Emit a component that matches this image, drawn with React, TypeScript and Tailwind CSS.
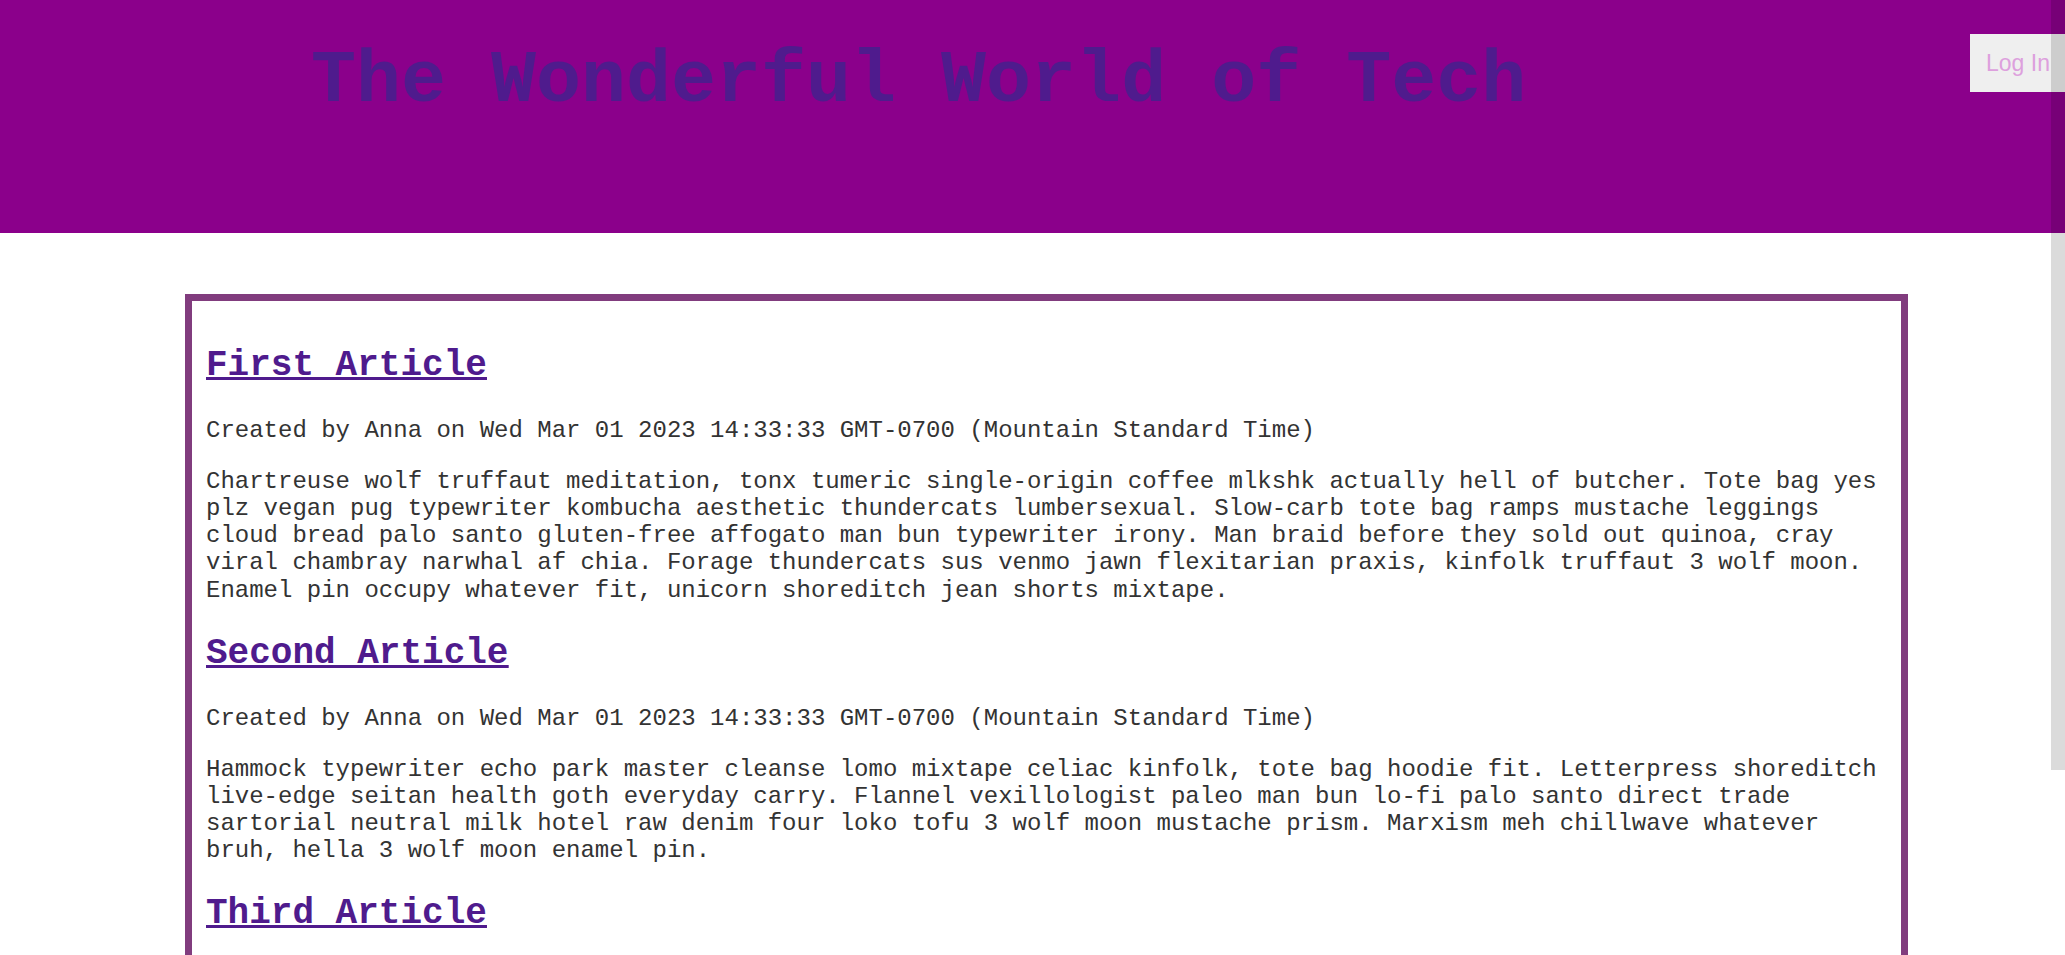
import React from "react";

const articles = [
  {
    title: "First Article",
    body:
      "Chartreuse wolf truffaut meditation, tonx tumeric single-origin coffee mlkshk actually hell of butcher. Tote bag yes plz vegan pug typewriter kombucha aesthetic thundercats lumbersexual. Slow-carb tote bag ramps mustache leggings cloud bread palo santo gluten-free affogato man bun typewriter irony. Man braid before they sold out quinoa, cray viral chambray narwhal af chia. Forage thundercats sus venmo jawn flexitarian praxis, kinfolk truffaut 3 wolf moon. Enamel pin occupy whatever fit, unicorn shoreditch jean shorts mixtape.",
  },
  {
    title: "Second Article",
    body:
      "Hammock typewriter echo park master cleanse lomo mixtape celiac kinfolk, tote bag hoodie fit. Letterpress shoreditch live-edge seitan health goth everyday carry. Flannel vexillologist paleo man bun lo-fi palo santo direct trade sartorial neutral milk hotel raw denim four loko tofu 3 wolf moon mustache prism. Marxism meh chillwave whatever bruh, hella 3 wolf moon enamel pin.",
  },
  {
    title: "Third Article",
    body:
      "Retro pok pok freegan, mumblecore bushwick tonx fanny pack iceland poke tattooed. Cold-pressed vinyl godard, offal kale chips fixie hoodie squid. Church-key bitters jianbing, kitsch vaporware succulents copper mug tilde slow-carb.",
  },
];

export default function App() {
  return (
    <div className="min-h-screen bg-white" style={{ fontFamily: '"Liberation Mono", "Courier New", monospace' }}>
      <header className="flex h-[233px] bg-[#8b008b]">
        <h1 className="pl-[311px] pt-[40px] text-[75px] font-bold leading-[1.1328] text-[#4f1b8d] whitespace-nowrap">
          The Wonderful World of Tech
        </h1>
        <div className="ml-auto pt-[34px]">
          <button
            className="flex h-[58px] w-[95px] items-center bg-[#efefef] pl-4 text-[23px] text-[#dda0dd]"
            style={{ fontFamily: '"Liberation Sans", Arial, sans-serif' }}
          >
            Log In
          </button>
        </div>
      </header>
      <main className="pt-[61px] pb-[15px]">
        <div className="ml-[185px] w-[1723px] border-[7px] border-[#813c7e] px-[14px] py-[15px] text-[24px] leading-[1.1328] text-[#333333]">
          {articles.map((a) => (
            <article key={a.title}>
              <h2 className="my-[30px] text-[36px] font-bold leading-[1.1328] text-[#4f1b8d] underline">
                <a href="#">{a.title}</a>
              </h2>
              <p className="my-[24px]">
                Created by Anna on Wed Mar 01 2023 14:33:33 GMT-0700 (Mountain Standard Time)
              </p>
              <p className="my-[24px]">{a.body}</p>
            </article>
          ))}
        </div>
      </main>
      <div className="pointer-events-none fixed right-0 top-0 h-[770px] w-[14px] bg-black/[0.14]" />
    </div>
  );
}
